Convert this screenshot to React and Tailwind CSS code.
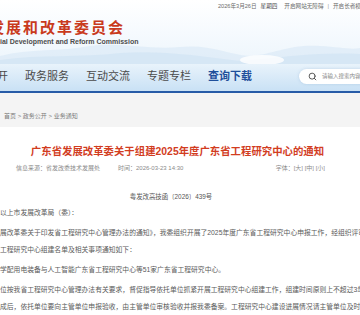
import React from "react";
import { Search } from "lucide-react";

const navItems = ["政务公开", "政务服务", "互动交流", "专题专栏", "查询下载"];

export default function App() {
  return (
    <div className="relative w-[360px] h-[315px] overflow-hidden bg-white font-['Liberation_Sans','Noto_Sans_CJK_SC',sans-serif]">
      {/* Header + nav */}
      <div className="relative h-[91px] overflow-hidden bg-[linear-gradient(180deg,#ffffff_0%,#f6fafe_35%,#eef6fc_65%,#c9e1f5_100%)]">
        <svg className="absolute left-0 top-[34px]" width="360" height="30" viewBox="0 0 360 30" preserveAspectRatio="none">
          <path d="M0 22 C30 14 60 18 90 12 C120 8 150 16 180 13 C210 10 225 20 250 22 C275 20 290 10 320 12 C340 13 350 16 360 14 L360 30 L0 30 Z" fill="#dbeaf7" opacity="0.7" />
          <path d="M0 26 C40 20 80 24 120 19 C160 16 200 22 240 27 C280 24 310 18 360 20 L360 30 L0 30 Z" fill="#cfe3f4" opacity="0.6" />
          <ellipse cx="262" cy="26" rx="22" ry="5" fill="#ffffff" opacity="0.8" />
        </svg>

        <div className="relative flex h-[55px] items-start">
          <div className="w-[218px] shrink-0">
            <div className="ml-[-11px] pt-[20px] text-[15px] leading-[15px] font-bold tracking-[2px] text-[#c93a1d] whitespace-nowrap">
              发展和改革委员会
            </div>
            <div className="mt-[3px] text-[7px] leading-[8px] font-bold text-[#4d4d4d] whitespace-nowrap">
              ial Development and Reform Commission
            </div>
          </div>
          <div className="pt-[3px] flex items-center gap-[4px] text-[5.6px] leading-[7px] text-[#6b6b6b] whitespace-nowrap">
            <span>2026年3月26日</span>
            <span className="text-[#444]">星期四</span>
            <span className="ml-[3px]">开启网站无障碍</span>
            <span className="text-[#999]">|</span>
            <span>开启长者模式</span>
          </div>
        </div>

        <div className="relative mt-[7px] flex h-[28px] items-center">
          <div className="ml-[-36px] flex shrink-0 gap-[17px] text-[11px] leading-[12px] whitespace-nowrap">
            {navItems.map((n, i) => (
              <span
                key={n}
                className={i === navItems.length - 1 ? "font-bold text-[#1f4f9b]" : "text-[#4a4a4a]"}
              >
                {n}
              </span>
            ))}
          </div>
          <div className="ml-[47px] flex h-[15px] w-[80px] shrink-0 items-center rounded-full bg-white pl-[9px] shadow-[0_0_3px_rgba(120,160,200,0.35)]">
            <Search size={9} strokeWidth={2.6} color="#555" />
            <span className="ml-[5px] text-[5.5px] leading-[6px] text-[#888] whitespace-nowrap">请输入搜索内容</span>
          </div>
        </div>
      </div>

      {/* blue rule */}
      <div className="h-[2px] bg-[#275ba7]" />

      {/* breadcrumb band */}
      <div className="h-[34px] bg-[#f4f4f4] pt-[19px] pl-[4px] text-[6px] leading-[8px] text-[#7a7a7a] whitespace-nowrap">
        首页 &gt; 政务公开 &gt; 业务通知
      </div>

      {/* content */}
      <div className="bg-white pt-[19px]">
        <div className="pr-[5px] text-center text-[10.4px] leading-[12px] font-bold text-[#d23d1f] whitespace-nowrap">
          广东省发展改革委关于组建2025年度广东省工程研究中心的通知
        </div>

        <div className="mt-[6px] flex items-center pl-[16px] pr-[35px] text-[6px] leading-[8px] text-[#8a8a8a] whitespace-nowrap">
          <span>信息来源：省发改委技术发展处</span>
          <span className="ml-[18px]">时间：2026-03-23 14:30</span>
          <span className="ml-auto">字体：[大] [中] [小]</span>
        </div>

        <div className="mt-[21px] flex justify-center pr-[18px] text-[6.4px] leading-[8px] text-[#555] whitespace-nowrap">
          粤发改高技函〔2026〕439号
        </div>

        <div className="mt-[3px] flex flex-col gap-[3px] text-[6.8px] leading-[17px] text-[#5a5a5a] whitespace-nowrap">
          <div>以上市发展改革局（委）：</div>
          <div>
            <div>展改革委关于印发省工程研究中心管理办法的通知》，我委组织开展了2025年度广东省工程研究中心申报工作，经组织评审</div>
            <div>工程研究中心组建名单及相关事项通知如下：</div>
          </div>
          <div>学配用电装备与人工智能广东省工程研究中心等51家广东省工程研究中心。</div>
          <div>
            <div>位按我省工程研究中心管理办法有关要求，督促指导依托单位抓紧开展工程研究中心组建工作，组建时间原则上不超过3年</div>
            <div>成后，依托单位要向主管单位申报验收，由主管单位审核验收并报我委备案。工程研究中心建设进展情况请主管单位及时</div>
          </div>
        </div>
      </div>
    </div>
  );
}
